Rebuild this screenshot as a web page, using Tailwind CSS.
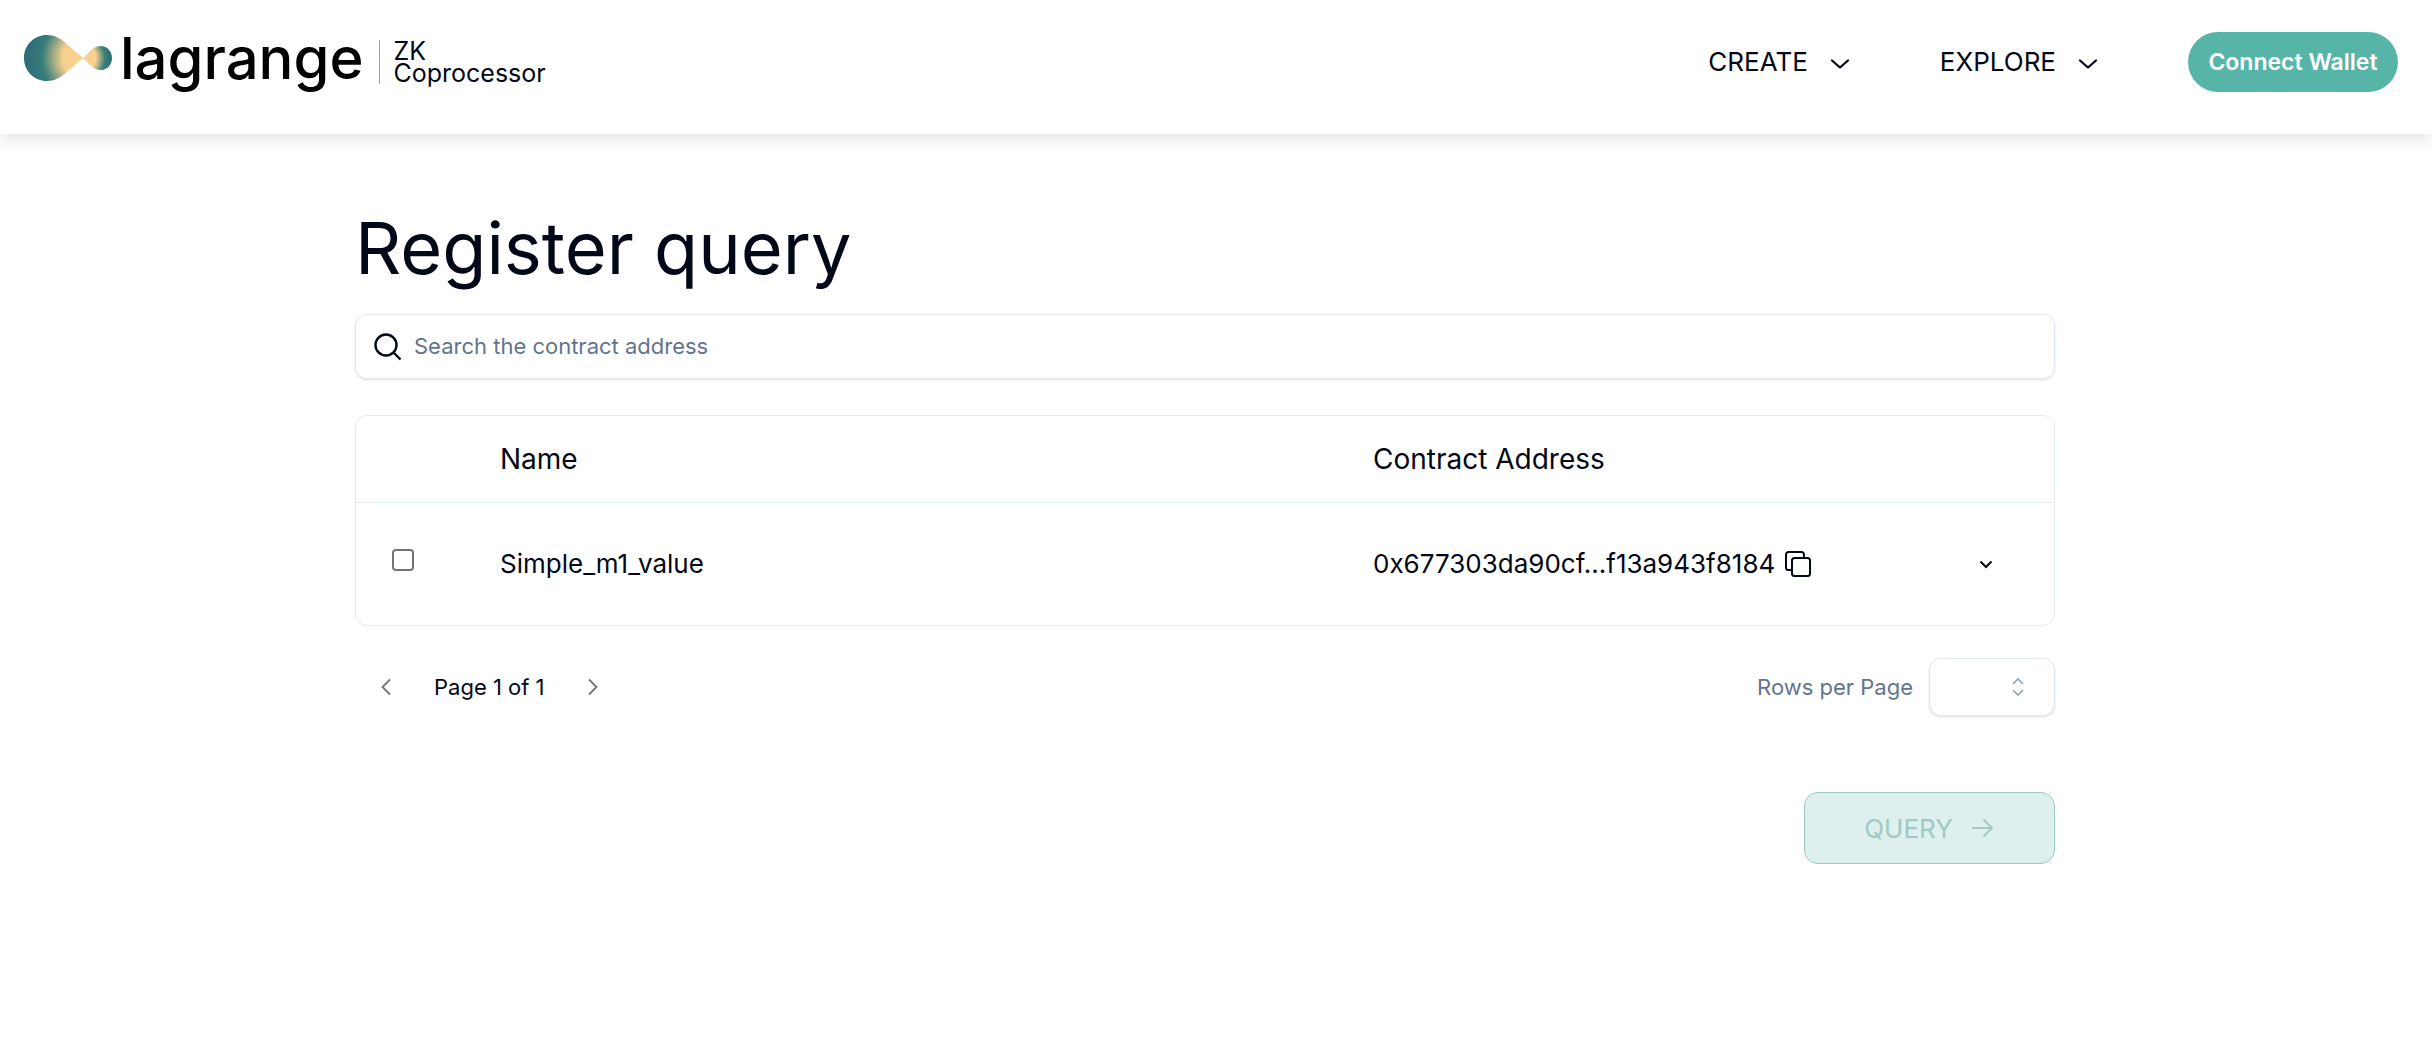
<!DOCTYPE html>
<html lang="en">
<head>
<meta charset="utf-8">
<title>Register query</title>
<script src="https://cdn.jsdelivr.net/npm/@tailwindcss/browser@4"></script>
</head>
<body class="min-h-screen bg-white font-['Inter',sans-serif] text-[#020817]">
<header class="flex items-start justify-between pr-[34px] pb-[42px] pl-6 shadow-[0_4px_16px_rgba(0,0,0,0.13)]">
  <a href="#" class="flex items-start pt-7">
    <svg class="h-[60px] w-[90px]" viewBox="0 0 90 60" aria-hidden="true">
      <defs>
        <radialGradient id="g" gradientUnits="userSpaceOnUse" cx="60" cy="30" r="60">
          <stop offset=".35" stop-color="#f9d18f"/><stop offset=".7" stop-color="#377d79"/><stop offset="1" stop-color="#2d6a78"/>
        </radialGradient>
        <radialGradient id="h" gradientUnits="userSpaceOnUse" cx="58" cy="30" r="31">
          <stop offset=".45" stop-color="#f9d18f"/><stop offset=".75" stop-color="#377d79"/><stop offset="1" stop-color="#2d6a78"/>
        </radialGradient>
      </defs>
      <path fill="url(#g)" d="M23 7C10 7 0 17 0 30s10 23 23 23c14 0 21-11 36-23C44 18 37 7 23 7z"/>
      <path fill="url(#h)" d="M77 18c6 0 11 5 11 12s-5 12-11 12c-8 0-11-6-18-12 7-6 10-12 18-12z"/>
    </svg>
    <span class="ml-[6px] text-[58px] leading-[60px] font-medium text-black">lagrange</span>
    <span class="mt-3 ml-[15px] h-11 w-px bg-neutral-400"></span>
    <span class="mt-3 ml-[14px] flex flex-col text-[25px] leading-[22px]"><span>ZK</span><span>Coprocessor</span></span>
  </a>
  <nav class="flex items-center pt-8">
    <button class="flex items-center gap-[22px] text-[26px] leading-8">CREATE
      <svg class="h-5 w-5" viewBox="0 0 20 20" fill="none" stroke="currentColor" stroke-width="2.2" stroke-linecap="round" stroke-linejoin="round"><path d="M2 8.500l8 7 8-7"/></svg>
    </button>
    <button class="ml-[90px] flex items-center gap-[22px] text-[26px] leading-8">EXPLORE
      <svg class="h-5 w-5" viewBox="0 0 20 20" fill="none" stroke="currentColor" stroke-width="2.2" stroke-linecap="round" stroke-linejoin="round"><path d="M2 8.500l8 7 8-7"/></svg>
    </button>
    <button class="ml-[90px] h-[60px] w-[210px] rounded-full bg-[#57b5a8] text-[23px] font-semibold text-white">Connect Wallet</button>
  </nav>
</header>
<div class="pr-[22px]">
<main class="mx-auto max-w-[1700px] pt-[74px]">
  <h1 class="text-[72px] leading-[80px]">Register query</h1>
  <label class="mt-[26px] flex h-[65px] items-center gap-[10px] rounded-xl border border-slate-200 px-4 shadow-sm">
    <svg class="h-8 w-8 shrink-0" viewBox="0 0 32 32" fill="none" stroke="currentColor" stroke-width="2.4"><circle cx="14" cy="14" r="10.5"/><path d="M21.500 21.500l7 7"/></svg>
    <input type="text" aria-label="Search" placeholder="Search the contract address" class="w-full text-[22px] outline-none placeholder:text-slate-500">
  </label>
  <div class="mt-9 overflow-hidden rounded-xl border border-slate-200">
    <table class="w-full table-fixed text-left">
      <colgroup><col class="w-[108px]"><col><col class="w-[583px]"><col class="w-[134px]"></colgroup>
      <thead>
        <tr class="h-[86px] border-b border-slate-200 text-[28px]">
          <th></th>
          <th class="px-9 font-normal">Name</th>
          <th class="px-9 font-normal">Contract Address</th>
          <th></th>
        </tr>
      </thead>
      <tbody>
        <tr class="h-[123px] text-[26px]">
          <td class="pl-9"><input type="checkbox" aria-label="Select Simple_m1_value" class="mb-2 block h-[22px] w-[22px] appearance-none rounded border-2 border-neutral-500 bg-white"></td>
          <td class="px-9">Simple_m1_value</td>
          <td class="px-9">
            <div class="flex items-center gap-[10px] whitespace-nowrap">0x677303da90cf...f13a943f8184
              <button aria-label="Copy address"><svg class="h-[26px] w-[26px]" viewBox="0 0 26 26" fill="none" stroke="currentColor" stroke-width="2" stroke-linejoin="round"><rect x="7" y="7" width="18" height="18" rx="2.500"/><path d="M7 19H3.500A2.500 2.500 0 0 1 1 16.500v-13A2.500 2.500 0 0 1 3.500 1h13A2.500 2.500 0 0 1 19 3.500V7"/></svg></button>
            </div>
          </td>
          <td><button aria-label="Expand row" class="ml-[58px] block"><svg class="h-4 w-4" viewBox="0 0 16 16" fill="none" stroke="currentColor" stroke-width="2"><path d="M2.500 5.500l5.500 5.500 5.500-5.500"/></svg></button></td>
        </tr>
      </tbody>
    </table>
  </div>
  <div class="mt-8 flex items-center justify-between text-[22px]">
    <div class="flex items-center pl-[22px]">
      <button disabled aria-label="Previous page" class="text-neutral-500"><svg class="h-5 w-5" viewBox="0 0 20 20" fill="none" stroke="currentColor" stroke-width="1.8"><path d="M13 2.500L5.500 10l7.500 7.500"/></svg></button>
      <span class="mx-[37px]">Page 1 of 1</span>
      <button disabled aria-label="Next page" class="text-neutral-500"><svg class="h-5 w-5" viewBox="0 0 20 20" fill="none" stroke="currentColor" stroke-width="1.8"><path d="M7 2.500l7.500 7.500L7 17.500"/></svg></button>
    </div>
    <div class="flex items-center gap-4">
      <label for="rows" class="text-slate-500">Rows per Page</label>
      <div class="grid h-[58px] w-[126px] items-center">
        <select id="rows" class="col-start-1 row-start-1 h-full w-full appearance-none rounded-xl border border-slate-200 bg-white shadow-sm"><option></option></select>
        <svg class="pointer-events-none col-start-1 row-start-1 mr-[30px] h-5 w-[14px] justify-self-end text-slate-400" viewBox="0 0 14 20" fill="none" stroke="currentColor" stroke-width="1.6"><path d="M2 7l5-5 5 5M2 13l5 5 5-5"/></svg>
      </div>
    </div>
  </div>
  <div class="mt-[76px] flex justify-end">
    <button disabled class="flex h-[72px] w-[251px] items-center justify-center gap-[18px] rounded-[14px] border border-[#9cc9c1] bg-[#ddf0ed] text-[26px] text-[#9fc9c2]">QUERY
      <svg class="h-6 w-6" viewBox="0 0 24 24" fill="none" stroke="currentColor" stroke-width="2"><path d="M1 12h20M12.500 3.500L21 12l-8.500 8.500"/></svg>
    </button>
  </div>
</main>
</div>
</body>
</html>
